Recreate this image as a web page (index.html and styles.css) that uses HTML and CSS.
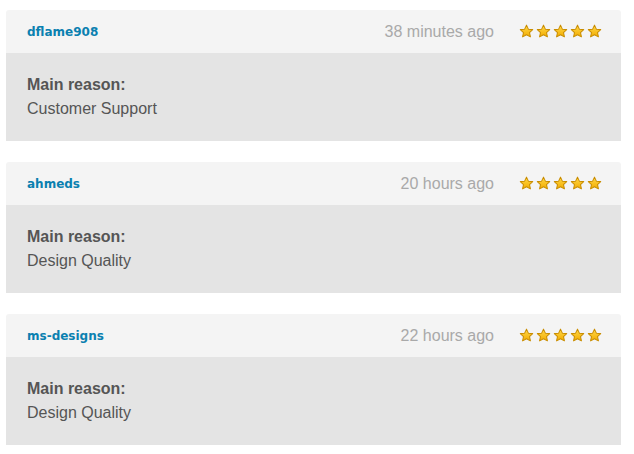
FILE: index.html
```html
<!DOCTYPE html>
<html lang="en">

<head>
    <meta charset="UTF-8">
    <meta name="viewport" content="width=device-width, initial-scale=1.0">
    <title>Reviews</title>
    <link rel="stylesheet" href="styles.css">
</head>

<body>
    <svg width="0" height="0" class="defs">
        <defs>
            <linearGradient id="gold" x1="0" y1="0" x2="0" y2="1">
                <stop offset="0" stop-color="#ffd84a" />
                <stop offset="1" stop-color="#f3ad00" />
            </linearGradient>
            <symbol id="star" viewBox="0 0 16 16">
                <path d="M8 1.2l2 4.3 4.6.5-3.4 3.1 1 4.6L8 11.4l-4.2 2.3 1-4.6L1.4 6l4.6-.5z" fill="url(#gold)" stroke="#c98d00" stroke-width="1.1" stroke-linejoin="round" />
            </symbol>
        </defs>
    </svg>

    <!-- Review 1 -->
    <div class="review">
        <div class="review-head">
            <a class="user" href="#">dflame908</a>
            <span class="time">38 minutes ago</span>
            <span class="stars">
                <svg><use href="#star" /></svg><svg><use href="#star" /></svg><svg><use href="#star" /></svg><svg><use href="#star" /></svg><svg><use href="#star" /></svg>
            </span>
        </div>
        <div class="review-body">
            <strong>Main reason:</strong>
            <p>Customer Support</p>
        </div>
    </div>

    <!-- Review 2 -->
    <div class="review">
        <div class="review-head">
            <a class="user" href="#">ahmeds</a>
            <span class="time">20 hours ago</span>
            <span class="stars">
                <svg><use href="#star" /></svg><svg><use href="#star" /></svg><svg><use href="#star" /></svg><svg><use href="#star" /></svg><svg><use href="#star" /></svg>
            </span>
        </div>
        <div class="review-body">
            <strong>Main reason:</strong>
            <p>Design Quality</p>
        </div>
    </div>

    <!-- Review 3 -->
    <div class="review">
        <div class="review-head">
            <a class="user" href="#">ms-designs</a>
            <span class="time">22 hours ago</span>
            <span class="stars">
                <svg><use href="#star" /></svg><svg><use href="#star" /></svg><svg><use href="#star" /></svg><svg><use href="#star" /></svg><svg><use href="#star" /></svg>
            </span>
        </div>
        <div class="review-body">
            <strong>Main reason:</strong>
            <p>Design Quality</p>
        </div>
    </div>
</body>

</html>
```

FILE: styles.css
```css
body {
    margin: 0;
    padding: 10px 13px 0 6px;
    background: #fff;
    font-family: 'Liberation Sans', Arial, sans-serif;
}

.defs {
    position: absolute;
}

/* Review card */
.review {
    margin-bottom: 21px;
}

.review-head {
    display: flex;
    align-items: center;
    height: 43px;
    padding: 0 19px 0 21px;
    background: #f4f4f4;
    border-radius: 3px 3px 0 0;
}

.user {
    flex: 1;
    font-family: 'DejaVu Sans', Verdana, sans-serif;
    font-size: 12px;
    font-weight: bold;
    color: #0a80b0;
    text-decoration: none;
}

.time {
    font-size: 16px;
    color: #a9a9a9;
    margin-right: 25px;
}

.stars {
    display: flex;
    gap: 2px;
}

.stars svg {
    width: 15px;
    height: 15px;
}

.review-body {
    padding: 20px 21px;
    background: #e4e4e4;
    color: #555;
    font-size: 16px;
    line-height: 24px;
}

.review-body strong {
    display: block;
}

.review-body p {
    margin: 0;
}
```
